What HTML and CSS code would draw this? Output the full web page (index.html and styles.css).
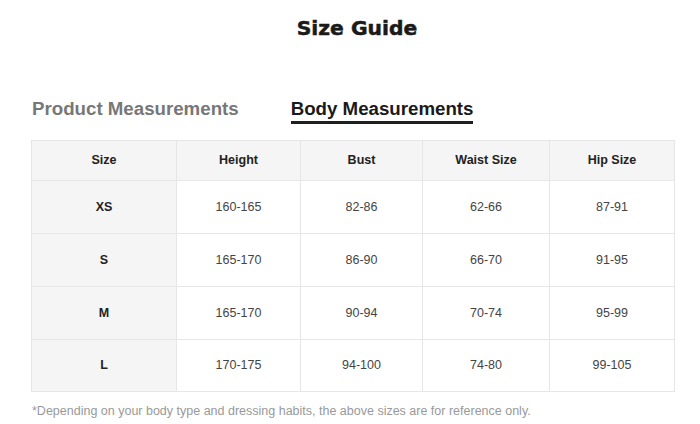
FILE: index.html
```html
<!DOCTYPE html>
<html>
<head>
<meta charset="utf-8">
<link rel="stylesheet" href="styles.css">
</head>
<body>
<div class="page">
  <h1 class="title">Size Guide</h1>
  <div class="tabs">
    <div class="tab">Product Measurements</div>
    <div class="tab active">Body Measurements</div>
  </div>
  <table class="grid">
    <thead>
      <tr><th>Size</th><th>Height</th><th>Bust</th><th>Waist Size</th><th>Hip Size</th></tr>
    </thead>
    <tbody>
      <tr><th>XS</th><td>160-165</td><td>82-86</td><td>62-66</td><td>87-91</td></tr>
      <tr><th>S</th><td>165-170</td><td>86-90</td><td>66-70</td><td>91-95</td></tr>
      <tr><th>M</th><td>165-170</td><td>90-94</td><td>70-74</td><td>95-99</td></tr>
      <tr><th>L</th><td>170-175</td><td>94-100</td><td>74-80</td><td>99-105</td></tr>
    </tbody>
  </table>
  <p class="note">*Depending on your body type and dressing habits, the above sizes are for reference only.</p>
</div>
</body>
</html>
```
FILE: styles.css
```css
html, body { margin: 0; padding: 0; background: #fff; }
body { font-family: "Liberation Sans", Arial, sans-serif; color: #222; }
.page { width: 700px; height: 424px; padding: 0 25px 0 31px; box-sizing: border-box; }
.title {
  margin: 0; padding-top: 15px; height: 40px; box-sizing: content-box;
  text-align: center; font-size: 20.3px; font-weight: 900; color: #1a1a1a;
  font-family: "DejaVu Sans", sans-serif; line-height: 26px;
  padding-left: 8px; -webkit-text-stroke: 0.5px #1a1a1a;
}
.tabs { display: flex; gap: 52px; margin-top: 43px; height: 42px; padding-left: 1px; }
.tab { font-size: 18.7px; font-weight: bold; color: #777; line-height: 22px; height: 27px; }
.tab.active { color: #1a1a1a; border-bottom: 3px solid #1f1f1f; height: 23px; }
.grid { width: 644px; border-collapse: collapse; table-layout: fixed; margin: 0; }
.grid th, .grid td {
  border: 1px solid #e6e6e6; text-align: center; font-size: 12.5px; color: #444;
  padding: 0 0 1px 0;
}
.grid thead th { background: #f5f5f5; height: 38px; font-weight: bold; color: #222; padding: 0 0 1px 0; }
.grid tbody th { background: #f5f5f5; font-weight: bold; color: #222; }
.grid tbody tr { height: 53px; }
.grid tbody tr:last-child { height: 52px; }
.grid tbody td { background: #fff; }
.grid th:nth-child(1) { width: 144px; }
.grid th:nth-child(2) { width: 123px; }
.grid th:nth-child(3) { width: 121px; }
.grid th:nth-child(4) { width: 126px; }
.note { margin: 12px 0 0 1px; font-size: 12.5px; color: #999; }
```
